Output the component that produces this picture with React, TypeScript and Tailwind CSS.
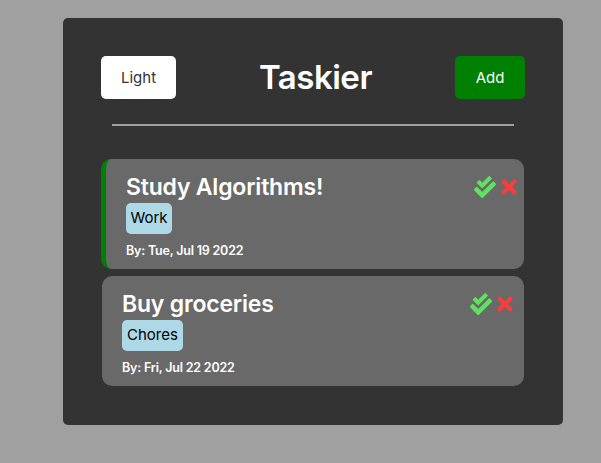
import { FaCheckDouble, FaTimes } from "react-icons/fa";

function Task({ title, tag, date, accent }: { title: string; tag: string; date: string; accent?: boolean }) {
  return (
    <div
      className={`flex h-[110px] justify-between rounded-[10px] bg-[#696969] pt-[14px] ${
        accent ? "border-l-[5px] border-[#008000] pl-5 pr-[4px]" : "ml-px pl-5 pr-[8px]"
      }`}
    >
      <div className="flex flex-col items-start">
        <h3 className="text-[23px] font-semibold leading-[28px] tracking-[-0.2px] text-white">{title}</h3>
        <span className={`mt-[2px] flex h-[31px] items-center justify-center rounded-[5px] bg-[#add8e6] text-[15px] text-black ${accent ? "w-[46px]" : "w-[61px]"}`}>{tag}</span>
        <p className="mt-[8px] text-[12.5px] font-semibold leading-[18px] tracking-[-0.2px] text-white">{date}</p>
      </div>
      <div className="flex items-center gap-[2px] self-start pt-[3px]">
        <FaCheckDouble className="text-[22px] text-[#5fe35f]" />
        <FaTimes className="text-[22px] text-[#ff3b3b]" />
      </div>
    </div>
  );
}

export default function App() {
  return (
    <div className="h-[463px] overflow-hidden bg-[#a0a0a0] pl-[63px] pt-[18px] font-['Inter',sans-serif]">
      <div className="h-[407px] w-[500px] rounded-[5px] bg-[#333333] pl-[38px] pr-[38px] pt-[38px]">
        <header className="flex h-[43px] items-center justify-between">
          <button className="h-[43px] w-[75px] rounded-[5px] bg-white pt-px text-[15px] text-[#333333]">Light</button>
          <h1 className="text-[33px] font-semibold tracking-[-0.5px] text-white">Taskier</h1>
          <button className="h-[43px] w-[70px] rounded-[5px] bg-[#008000] pt-px text-[15px] text-white">Add</button>
        </header>
        <hr className="ml-[11px] mr-[11px] mt-[25px] border-t-2 border-[#a0a0a0]" />
        <div className="mr-px mt-[33px] flex flex-col gap-[7px]">
          <Task title="Study Algorithms!" tag="Work" date="By: Tue, Jul 19 2022" accent />
          <Task title="Buy groceries" tag="Chores" date="By: Fri, Jul 22 2022" />
        </div>
      </div>
    </div>
  );
}
